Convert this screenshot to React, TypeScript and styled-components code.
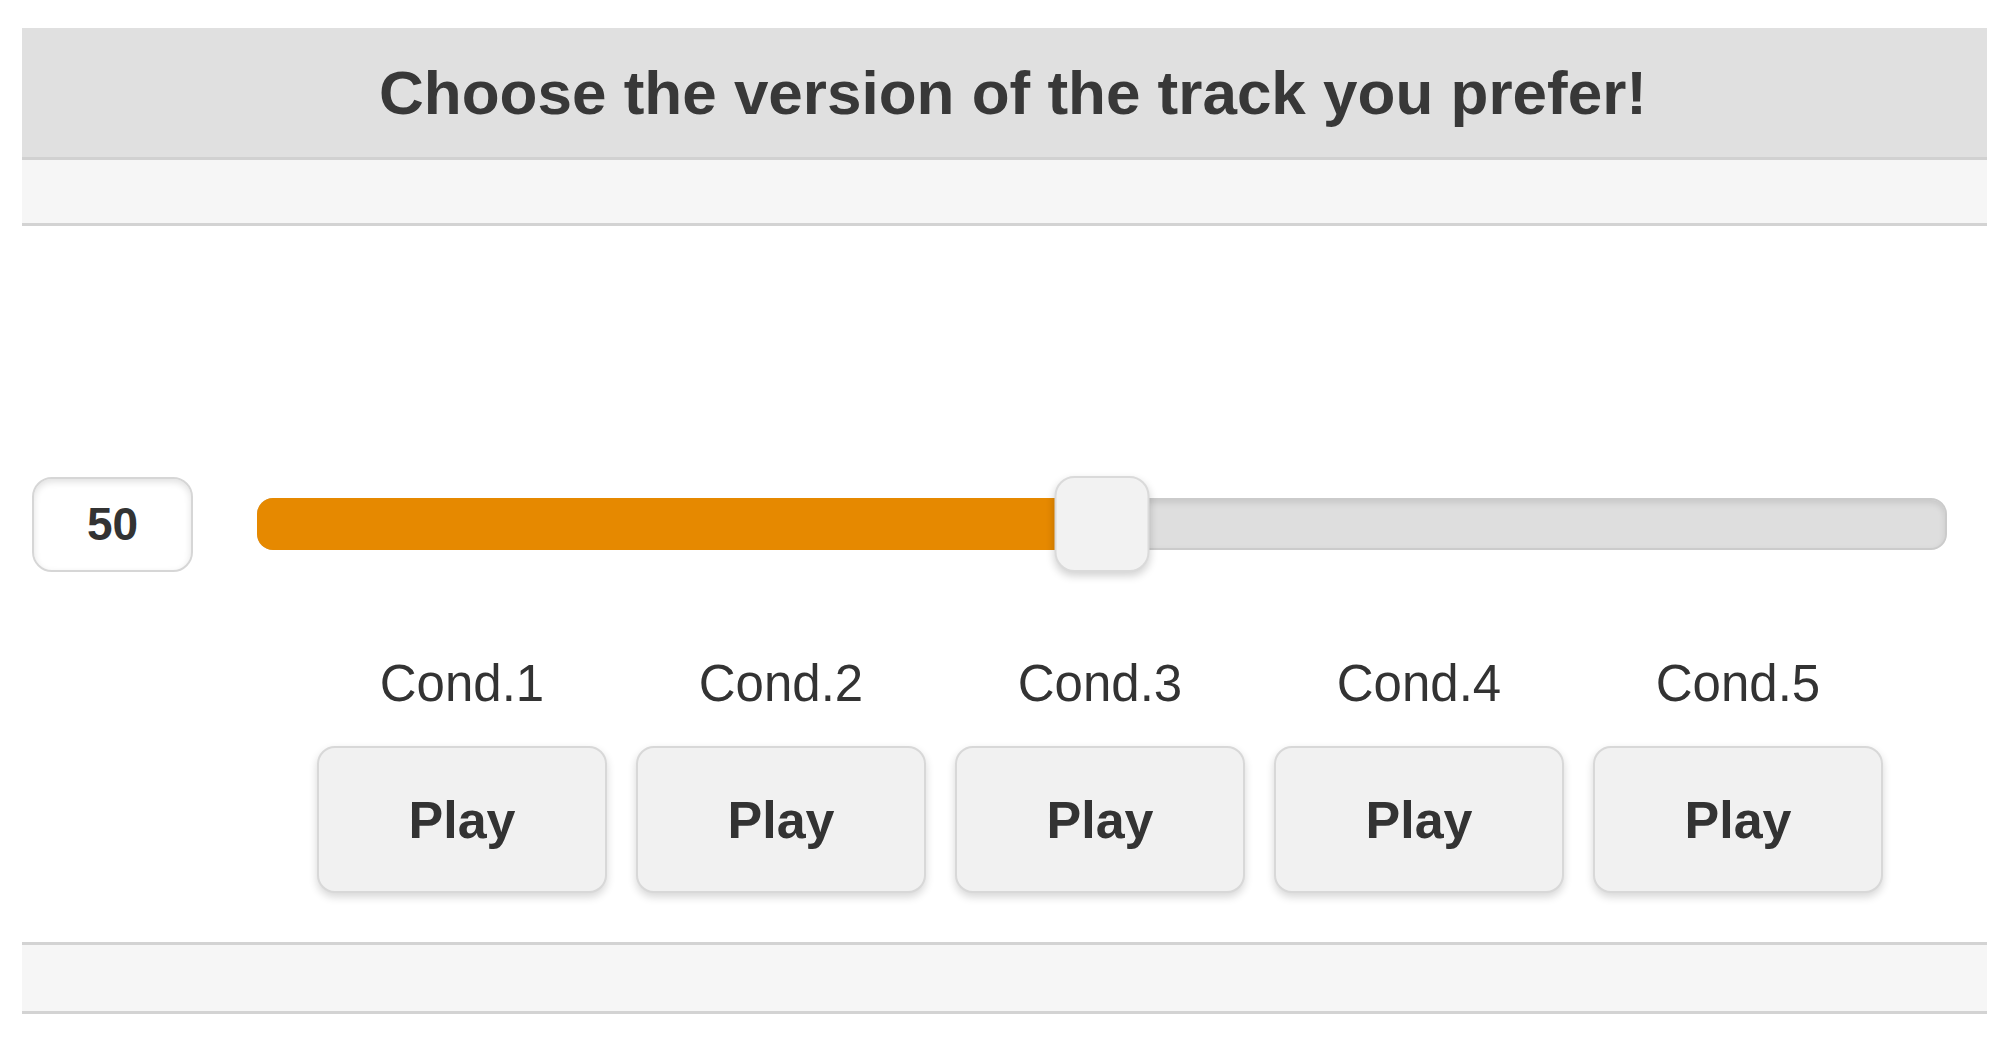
import React from "react";
import styled, { createGlobalStyle } from "styled-components";

const GlobalStyle = createGlobalStyle`
  html, body {
    margin: 0;
    padding: 0;
    background: #ffffff;
  }
  body {
    font-family: "Liberation Sans", Arial, sans-serif;
    color: #333333;
  }
`;

const Page = styled.div`
  padding: 28px 23px 0 22px;
  width: 2010px;
  box-sizing: border-box;
`;

const Header = styled.header`
  height: 129px;
  background: #e0e0e0;
  border-bottom: 3px solid #d1d1d1;
  display: flex;
  align-items: center;
  justify-content: center;
`;

const Title = styled.h1`
  margin: 0;
  font-size: 62px;
  line-height: 129px;
  font-weight: bold;
  color: #383838;
  padding-left: 17px;
`;

const Strip = styled.div<{ $top?: boolean }>`
  height: 63px;
  background: #f6f6f6;
  border-bottom: 3px solid #d3d3d3;
  ${(p) => (p.$top ? "border-top: 3px solid #d3d3d3; height: 66px;" : "")}
`;

const Content = styled.main`
  padding: 249px 0 49px 0;
`;

const SliderRow = styled.div`
  display: flex;
  align-items: center;
  height: 98px;
  padding-left: 10px;
  padding-right: 40px;
`;

const ValueBox = styled.div`
  width: 161px;
  height: 95px;
  box-sizing: border-box;
  border: 2px solid #d6d6d6;
  border-radius: 20px;
  background: #ffffff;
  box-shadow: inset 0 3px 7px rgba(0, 0, 0, 0.12);
  display: flex;
  align-items: center;
  justify-content: center;
  font-size: 46px;
  font-weight: bold;
  color: #333333;
  flex: none;
`;

const Track = styled.div`
  position: relative;
  flex: 1;
  margin-left: 64px;
  height: 52px;
  box-sizing: border-box;
  border: 2px solid #cbcbcb;
  border-radius: 16px;
  background: #dedede;
  box-shadow: inset 0 3px 6px rgba(0, 0, 0, 0.1);
`;

const Fill = styled.div`
  position: absolute;
  left: -2px;
  top: -2px;
  bottom: -2px;
  background: #e68900;
  border-radius: 16px 0 0 16px;
`;

const Thumb = styled.div`
  position: absolute;
  top: 50%;
  width: 95px;
  height: 96px;
  transform: translate(-50%, -50%);
  box-sizing: border-box;
  border: 2px solid #dadada;
  border-radius: 20px;
  background: #f2f2f2;
  box-shadow: 0 4px 8px rgba(0, 0, 0, 0.18);
`;

const Conditions = styled.div`
  display: grid;
  grid-template-columns: repeat(5, 290px);
  column-gap: 29px;
  padding-left: 295px;
  margin-top: 81px;
`;

const Condition = styled.div`
  display: flex;
  flex-direction: column;
  align-items: center;
  gap: 32px;
`;

const Label = styled.div`
  font-size: 51px;
  line-height: 60px;
  height: 60px;
  color: #333333;
`;

const PlayButton = styled.button`
  width: 290px;
  height: 147px;
  box-sizing: border-box;
  border: 2px solid #d8d8d8;
  border-radius: 18px;
  background: #f1f1f1;
  box-shadow: 0 4px 8px rgba(0, 0, 0, 0.16);
  font-family: "Liberation Sans", Arial, sans-serif;
  font-size: 52px;
  font-weight: bold;
  color: #333333;
  cursor: pointer;
  padding: 0;
`;

const conditions = ["Cond.1", "Cond.2", "Cond.3", "Cond.4", "Cond.5"];

export default function App() {
  const value = 50;
  return (
    <>
      <GlobalStyle />
      <Page>
        <Header>
          <Title>Choose the version of the track you prefer!</Title>
        </Header>
        <Strip />
        <Content>
          <SliderRow>
            <ValueBox>{value}</ValueBox>
            <Track>
              <Fill style={{ width: `calc(${value}% + 2px)` }} />
              <Thumb style={{ left: `${value}%` }} />
            </Track>
          </SliderRow>
          <Conditions>
            {conditions.map((c) => (
              <Condition key={c}>
                <Label>{c}</Label>
                <PlayButton>Play</PlayButton>
              </Condition>
            ))}
          </Conditions>
        </Content>
        <Strip $top />
      </Page>
    </>
  );
}
